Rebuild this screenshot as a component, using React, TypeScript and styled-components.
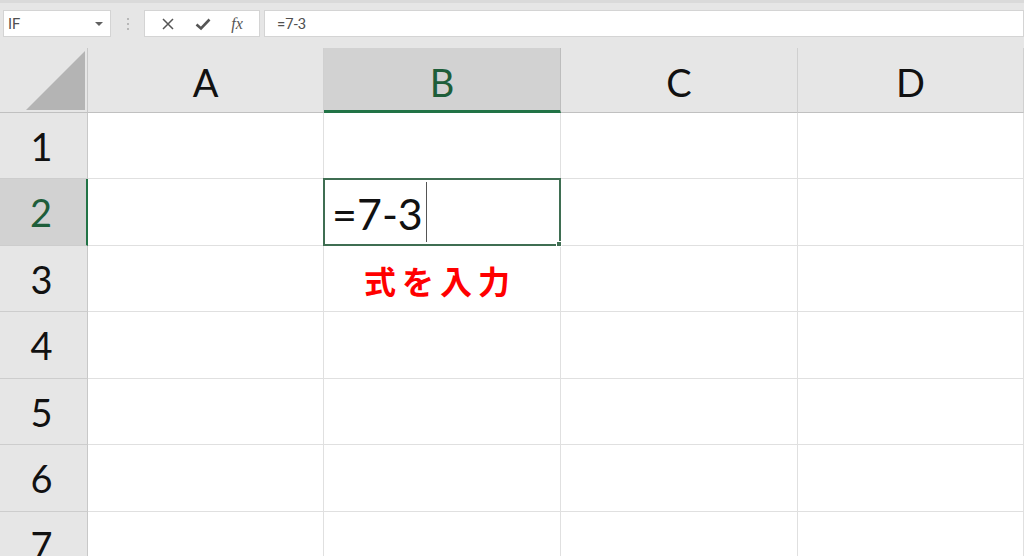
import React from "react";
import styled, { createGlobalStyle } from "styled-components";

const Global = createGlobalStyle`
  html, body { margin: 0; padding: 0; background: #e6e6e6; overflow: hidden; }
  body { font-family: "Lato", "Noto Sans", sans-serif; }
`;

const Page = styled.div`
  width: 1024px;
  height: 556px;
  display: flex;
  flex-direction: column;
  background: #e6e6e6;
  overflow: hidden;
`;

const Toolbar = styled.div`
  height: 48px;
  flex: none;
  box-sizing: border-box;
  border-top: 3px solid #dadada;
  padding: 7px 0 0 3px;
  display: flex;
  align-items: flex-start;
`;

const Box = styled.div<{ $w?: number }>`
  height: 27px;
  box-sizing: border-box;
  background: #ffffff;
  border: 1px solid #d4d4d4;
  display: flex;
  align-items: center;
  ${(p) => (p.$w ? `width: ${p.$w}px; flex: none;` : "flex: 1;")}
`;

const BoxText = styled.span<{ $pl: number }>`
  font-family: "Roboto", "Liberation Sans", sans-serif;
  font-size: 15px;
  color: #505050;
  padding-left: ${(p) => p.$pl}px;
  flex: 1;
`;

const Caret = styled.span`
  width: 0;
  height: 0;
  border-left: 4px solid transparent;
  border-right: 4px solid transparent;
  border-top: 4px solid #606060;
  margin-right: 7px;
`;

const Dots = styled.div`
  width: 33px;
  flex: none;
  display: flex;
  flex-direction: column;
  align-items: center;
  gap: 3px;
  padding-top: 8px;
  span { width: 2px; height: 2px; background: #a8a8a8; border-radius: 1px; }
`;

const IconRow = styled.div`
  display: flex;
  align-items: center;
  justify-content: space-around;
  width: 100%;
  padding: 0 6px;
`;

const Fx = styled.span`
  font-family: "Liberation Serif", "DejaVu Serif", serif;
  font-style: italic;
  font-size: 16px;
  color: #555;
`;

const Gap = styled.div<{ $w: number }>`
  width: ${(p) => p.$w}px;
  flex: none;
`;

const Sheet = styled.div`
  display: grid;
  grid-template-columns: 88px 236px 237px 237px 1fr;
  grid-template-rows: 65px 66px 67px 66px 67px 66px 67px 66px;
  background: #fff;
  flex: none;
  overflow: hidden;
  height: 508px;
`;

const Corner = styled.div`
  background: #e6e6e6;
  border-right: 1px solid #c8c8c8;
  border-bottom: 1px solid #c0c0c0;
  box-sizing: border-box;
  position: relative;
`;

const Tri = styled.div`
  position: absolute;
  right: 2px;
  bottom: 2px;
  width: 0;
  height: 0;
  border-left: 59px solid transparent;
  border-bottom: 59px solid #b4b4b4;
`;

const ColHead = styled.div<{ $sel?: boolean }>`
  box-sizing: border-box;
  background: ${(p) => (p.$sel ? "#d2d2d2" : "#e6e6e6")};
  border-right: 1px solid ${(p) => (p.$sel ? "#bdbdbd" : "#d0d0d0")};
  border-bottom: ${(p) => (p.$sel ? "3px solid #217346" : "1px solid #c0c0c0")};
  display: flex;
  align-items: center;
  justify-content: center;
  padding-top: ${(p) => (p.$sel ? "6px" : "4px")};
  font-size: 38px;
  color: ${(p) => (p.$sel ? "#1e5e3a" : "#111")};
`;

const RowHead = styled.div<{ $sel?: boolean }>`
  box-sizing: border-box;
  background: ${(p) => (p.$sel ? "#d2d2d2" : "#e6e6e6")};
  border-right: ${(p) => (p.$sel ? "2px solid #217346" : "1px solid #c8c8c8")};
  border-bottom: 1px solid #cdcdcd;
  display: flex;
  align-items: center;
  justify-content: center;
  padding-right: 4px;
  font-size: 38px;
  color: ${(p) => (p.$sel ? "#1e5e3a" : "#111")};
`;

const Cell = styled.div`
  box-sizing: border-box;
  border-right: 1px solid #e0e0e0;
  border-bottom: 1px solid #e0e0e0;
  position: relative;
  display: flex;
  align-items: center;
  justify-content: center;
`;

const Active = styled.div`
  position: absolute;
  left: -1px;
  top: -1px;
  right: -1px;
  bottom: -1px;
  border: 2px solid #3f6e52;
  background: #fff;
  display: flex;
  align-items: center;
  padding-left: 7px;
  z-index: 2;
`;

const Handle = styled.div`
  position: absolute;
  right: -3px;
  bottom: -3px;
  width: 4px;
  height: 4px;
  background: #3f6e52;
  border: 1px solid #fff;
`;

const Entry = styled.span`
  font-size: 43px;
  color: #111;
  line-height: 1;
  padding-top: 2px;
`;

const Cursor = styled.span`
  display: inline-block;
  width: 1px;
  height: 60px;
  background: #555;
  margin-left: 3px;
`;

const Note = styled.span`
  font-family: "Noto Sans CJK JP", sans-serif;
  font-weight: 700;
  font-size: 32px;
  letter-spacing: 6px;
  white-space: nowrap;
  color: #ff0000;
  margin-right: 4px;
  padding-top: 2px;
`;

const cols = ["A", "B", "C", "D"];
const rows = [1, 2, 3, 4, 5, 6, 7];

export default function App() {
  return (
    <Page>
      <Global />
      <Toolbar>
        <Box $w={108}>
          <BoxText $pl={4}>IF</BoxText>
          <Caret />
        </Box>
        <Dots>
          <span />
          <span />
          <span />
        </Dots>
        <Box $w={116}>
          <IconRow>
            <svg width="14" height="14" viewBox="0 0 14 14">
              <path d="M2 2 L12 12 M12 2 L2 12" stroke="#555" strokeWidth="1.5" fill="none" />
            </svg>
            <svg width="16" height="14" viewBox="0 0 16 14">
              <path d="M1.5 7.5 L6 11.5 L14.5 2.5" stroke="#555" strokeWidth="2.6" fill="none" />
            </svg>
            <Fx>fx</Fx>
          </IconRow>
        </Box>
        <Gap $w={4} />
        <Box>
          <BoxText $pl={12}>=7-3</BoxText>
        </Box>
      </Toolbar>
      <Sheet>
        <Corner>
          <Tri />
        </Corner>
        {cols.map((c) => (
          <ColHead key={c} $sel={c === "B"}>
            {c}
          </ColHead>
        ))}
        {rows.map((r) => (
          <React.Fragment key={r}>
            <RowHead $sel={r === 2}>{r}</RowHead>
            {cols.map((c) => (
              <Cell key={c}>
                {r === 2 && c === "B" && (
                  <Active>
                    <Entry>=7-3</Entry>
                    <Cursor />
                    <Handle />
                  </Active>
                )}
                {r === 3 && c === "B" && <Note>式を入力</Note>}
              </Cell>
            ))}
          </React.Fragment>
        ))}
      </Sheet>
    </Page>
  );
}
